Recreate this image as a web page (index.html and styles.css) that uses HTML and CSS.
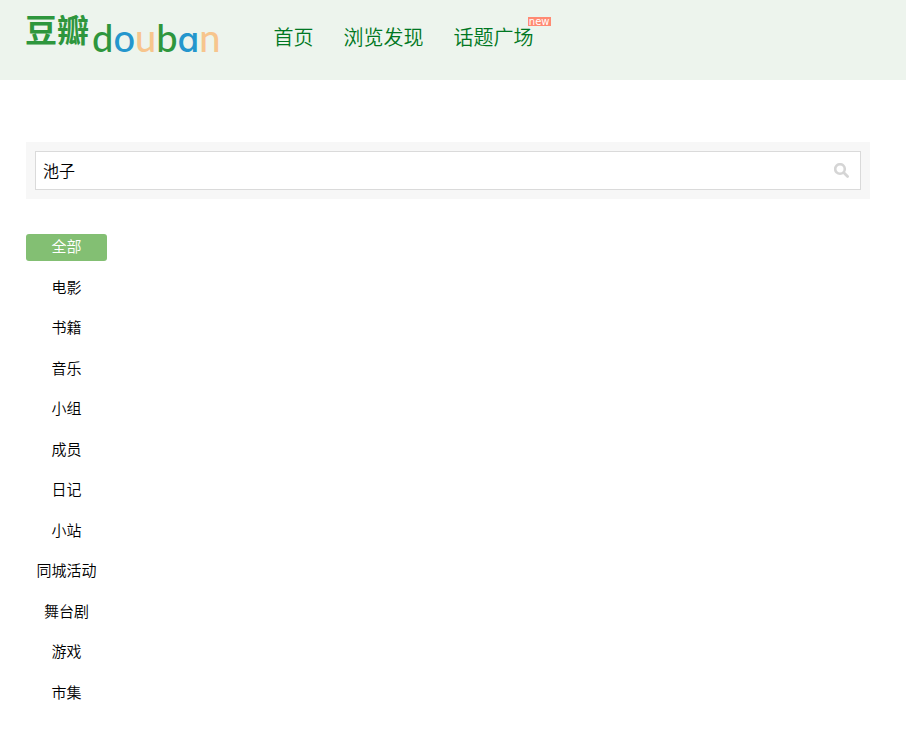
FILE: index.html
```html
<!DOCTYPE html>
<html lang="zh-CN">
<head>
    <meta charset="utf-8" />
    <title>搜索: 池子</title>
    <link rel="stylesheet" href="styles.css">
</head>
<body>
    <div id="header">
        <a class="logo" href="#">
            <span class="logo_cn">豆瓣</span>
            <span class="logo_en"><span class="green">d</span><span class="blue">o</span><span class="orange">u</span><span class="green">b</span><span class="blue round_a">a</span><span class="orange">n</span></span>
        </a>
        <ul class="nav">
            <li><a href="#">首页</a></li>
            <li><a href="#">浏览发现</a></li>
            <li><a href="#">话题广场<span class="new">new</span></a></li>
        </ul>
    </div>
    <div id="content">
        <form class="search">
            <div class="search_box">
                <input class="search_input" type="text" name="q" value="池子" aria-label="搜索" />
                <button class="search_button" type="submit" aria-label="搜索">
                    <svg width="16" height="16" viewBox="0 0 16 16">
                        <circle cx="6" cy="6" r="4.8" fill="none" stroke="#d5d5d5" stroke-width="2.6" />
                        <path d="M9.6 9.4l4 4" fill="none" stroke="#d5d5d5" stroke-width="2.8" stroke-linecap="round" />
                    </svg>
                </button>
            </div>
        </form>
        <ul class="types">
            <li><a class="on" href="#">全部</a></li>
            <li><a href="#">电影</a></li>
            <li><a href="#">书籍</a></li>
            <li><a href="#">音乐</a></li>
            <li><a href="#">小组</a></li>
            <li><a href="#">成员</a></li>
            <li><a href="#">日记</a></li>
            <li><a href="#">小站</a></li>
            <li><a href="#">同城活动</a></li>
            <li><a href="#">舞台剧</a></li>
            <li><a href="#">游戏</a></li>
            <li><a href="#">市集</a></li>
        </ul>
    </div>
</body>
</html>
```

FILE: styles.css
```css
body {
    margin: 0;
    background-color: #ffffff;
    font-family: "Liberation Sans", "Noto Sans CJK SC", sans-serif;
    font-weight: 350;
    color: #000000;
}
a {
    color: inherit;
    text-decoration: none;
}
ul {
    margin: 0;
    padding: 0;
    list-style: none;
}
#header {
    display: flex;
    align-items: flex-start;
    height: 80px;
    padding: 0 36px 0 25px;
    box-sizing: border-box;
    background-color: #edf4ed;
}
.logo {
    display: flex;
    gap: 3px;
    margin-right: 53px;
    color: #2e963d;
}
.logo_cn {
    font-family: "Noto Sans CJK SC", sans-serif;
    font-size: 32px;
    font-weight: 700;
    line-height: 56px;
}
.logo_en {
    font-family: Lato, sans-serif;
    font-size: 38px;
    font-weight: 500;
    line-height: 74px;
}
.round_a {
    font-family: Inter, sans-serif;
    font-size: 35px;
    line-height: 1;
    font-feature-settings: "cv11";
}
.green {
    color: #2e963d;
}
.blue {
    color: #2496cd;
}
.orange {
    color: #f7c58d;
}
.nav {
    display: flex;
    gap: 30px;
    font-size: 20px;
    line-height: 76px;
    color: #007722;
}
.nav a {
    position: relative;
}
.new {
    position: absolute;
    top: -10px;
    right: -17px;
    padding: 0 1px;
    background-color: #ff8a73;
    color: #ffffff;
    font-family: "DejaVu Sans", sans-serif;
    font-size: 10px;
    font-weight: 400;
    line-height: 9px;
}
#content {
    padding: 62px 36px 36px 26px;
}
.search {
    padding: 9px;
    background-color: #f7f7f7;
}
.search_box {
    display: flex;
    align-items: center;
    border: 1px solid #dadada;
    background-color: #ffffff;
}
.search_input {
    flex: 1;
    min-width: 0;
    height: 37px;
    padding: 0 7px 2px;
    border: none;
    outline: none;
    background: none;
    box-sizing: border-box;
    color: #000000;
    font-family: inherit;
    font-size: 16px;
    font-weight: inherit;
}
.search_button {
    display: flex;
    padding: 0 10px;
    border: none;
    background: none;
    cursor: pointer;
}
.types {
    width: 81px;
    margin-top: 35px;
    text-align: center;
    font-size: 15px;
    line-height: 1.5;
}
.types li {
    margin-bottom: 14px;
}
.types a {
    display: block;
    padding: 2px 0;
    border-radius: 3px;
}
.types .on {
    background-color: #83bf73;
    color: #ffffff;
}
```
